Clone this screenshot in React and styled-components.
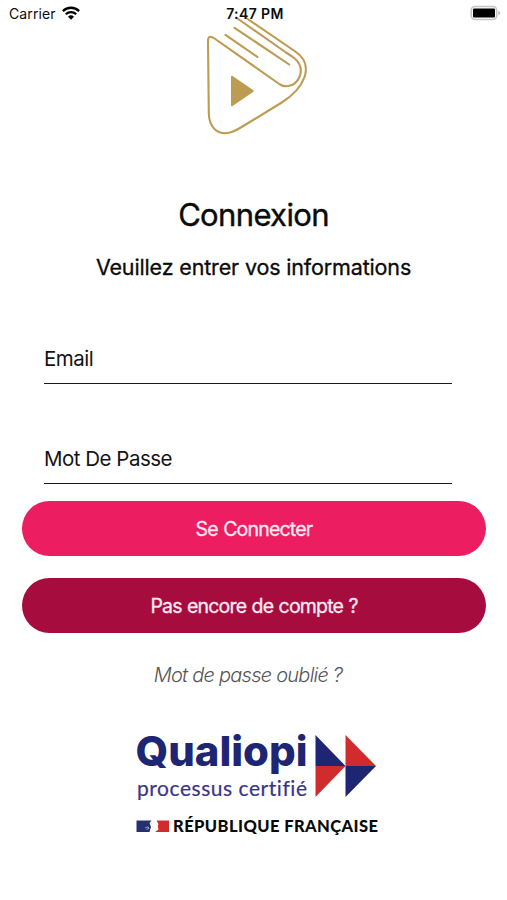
import React from 'react';
import styled, { createGlobalStyle } from 'styled-components';

const GlobalStyle = createGlobalStyle`
  * {
    box-sizing: border-box;
  }

  body {
    margin: 0;
    background-color: #ffffff;
    color: #0b0b0b;
    font-family: Inter, 'Liberation Sans', sans-serif;
  }
`;

const Screen = styled.main`
  width: 507px;
  height: 900px;
  overflow: hidden;
  display: flex;
  flex-direction: column;
  align-items: center;
`;

const StatusBar = styled.header`
  width: 100%;
  height: 27px;
  flex-shrink: 0;
  padding: 0 6px 0 9px;
  display: grid;
  grid-template-columns: 1fr auto 1fr;
  align-items: center;
  position: relative;
  z-index: 1;
`;

const Carrier = styled.div`
  display: flex;
  align-items: center;
  gap: 6px;
  font-size: 14px;
  letter-spacing: 0.1px;

  svg {
    margin-top: -2px;
  }
`;

const Time = styled.div`
  font-size: 14px;
  font-weight: 600;
  letter-spacing: 0.4px;
`;

const BatteryIcon = styled.svg`
  justify-self: end;
  margin-top: -1px;
`;

const Logo = styled.svg`
  flex-shrink: 0;
  margin-top: -13px;
  margin-left: 6px;
`;

const Title = styled.h1`
  margin: 58px 0 0;
  font-size: 31px;
  line-height: 38px;
  font-weight: 400;
  letter-spacing: -0.65px;
  -webkit-text-stroke: 0.4px;
`;

const Subtitle = styled.p`
  margin: 20px 0 0;
  font-size: 21.5px;
  line-height: 26px;
  letter-spacing: -0.15px;
  -webkit-text-stroke: 0.3px;
`;

const Form = styled.form`
  width: 464px;
  margin: 50px 0 0 1px;
  display: flex;
  flex-direction: column;
`;

const Input = styled.input`
  width: 408px;
  height: 54px;
  margin: 0 0 46px 22px;
  padding: 4px 0 0;
  border: 0;
  border-bottom: 1.5px solid #1b1b1b;
  border-radius: 0;
  background: none;
  font: inherit;
  font-size: 20.5px;
  letter-spacing: -0.5px;
  outline: none;

  &::placeholder {
    color: #141414;
    opacity: 1;
  }

  &:last-of-type {
    margin-bottom: 17px;
    padding-top: 3px;
  }
`;

const Button = styled.button`
  height: 55px;
  margin-bottom: 22px;
  padding: 0;
  border: 0;
  border-radius: 28px;
  background-color: ${({ $color }) => $color};
  color: #ffeaf2;
  font: inherit;
  font-size: 19.5px;
  letter-spacing: -0.8px;
  word-spacing: 0.6px;
  -webkit-text-stroke: 0.3px;
`;

const ForgotLink = styled.a`
  margin: 7px 0 0 -11px;
  font-size: 20px;
  line-height: 26px;
  font-style: italic;
  font-weight: 300;
  letter-spacing: -0.75px;
  color: #555555;
`;

const Certification = styled.svg`
  flex-shrink: 0;
  margin-top: 32px;
  margin-left: 7px;
`;

const LogoText = styled.text`
  font-family: ${({ $family }) => $family};
  font-size: ${({ $size }) => $size}px;
  font-weight: ${({ $weight }) => $weight};
  font-variant-ligatures: none;
`;

const App = () => (
  <>
    <GlobalStyle />
    <Screen>
      <StatusBar>
        <Carrier>
          Carrier
          <svg width='18' height='14' viewBox='0 0 18 14'>
            <g fill='none' stroke='#000000' strokeWidth='2.3'>
              <path d='M0.9 5.1a11.5 11.5 0 0 1 16.2 0' />
              <path d='M3.8 8.2a7.4 7.4 0 0 1 10.4 0' />
            </g>
            <path d='M9 13.8l-3-3.1a4.3 4.3 0 0 1 6 0z' />
          </svg>
        </Carrier>
        <Time>7:47 PM</Time>
        <BatteryIcon width='31' height='16' viewBox='0 0 31 16'>
          <rect x='1.2' y='1.5' width='25.5' height='13' rx='4' fill='#ffffff' stroke='#c4c4c4' strokeWidth='1.6' />
          <rect x='3' y='3.5' width='22' height='9' rx='1' />
          <path d='M28.5 5.700q2.800 2.300 0 4.600z' fill='#a5a5a5' />
        </BatteryIcon>
      </StatusBar>

      <Logo width='108' height='124' viewBox='203 14 108 124'>
        <g fill='none' stroke='#bd9b50' strokeWidth='2.1' strokeLinecap='round' strokeLinejoin='round'>
          <path d='M237.500 18.500L286 52.500Q290 55 293.500 57.500C301 63 302.500 71 299 78C295 86 286 88 280 84.500L214.500 38.500Q208 34 208 41L208.800 113C209 128 218 135.500 230 132.500Q235 131 240 128L281 103C294 95 301 87 304.500 77C308 67 304.500 58 296 52L245.500 17.500' />
          <path d='M234.500 27.800L289.200 64.500' />
          <path d='M225.500 34.800L257.500 57' />
        </g>
        <path d='M232 76.800L252.800 91L232 105.300Z' fill='#bd9b50' stroke='#bd9b50' strokeWidth='2' strokeLinejoin='round' />
      </Logo>

      <Title>Connexion</Title>
      <Subtitle>Veuillez entrer vos informations</Subtitle>

      <Form>
        <Input type='email' placeholder='Email' />
        <Input type='password' placeholder='Mot De Passe' />
        <Button type='button' $color='#ec1d60'>Se Connecter</Button>
        <Button type='button' $color='#a70c3e'>Pas encore de compte ?</Button>
      </Form>

      <ForgotLink>Mot de passe oublié ?</ForgotLink>

      <Certification width='250' height='118' viewBox='132 720 250 118'>
        <LogoText x='135.500' y='765.500' textLength='172' lengthAdjust='spacingAndGlyphs' $family='Inter, sans-serif' $size={41} $weight={800} fill='#1e2674'>Qualiopi</LogoText>
        <LogoText x='137' y='795.500' textLength='170' $family='Lato, sans-serif' $size={21} $weight={400} fill='#393589' stroke='#393589' strokeWidth='0.2'>processus certifié</LogoText>
        <path d='M315.500 735L345.500 766H315.500Z' fill='#1e2674' />
        <path d='M315.500 766H345.500L315.500 797Z' fill='#d12c2d' />
        <path d='M345.500 735L376 766H345.500Z' fill='#d12c2d' />
        <path d='M345.500 766H376L345.500 797Z' fill='#1e2674' />
        <path d='M136.500 820.500H151.500L149.500 823L151 827L149.500 832H136.500Z' fill='#26306f' />
        <path d='M156.500 820.500H169V832H155L158.500 829.500L157.800 826L158.500 824Z' fill='#d12c2d' />
        <path d='M145 828l3-1.200 1 1.700-2.500 1' fill='none' stroke='#b9bdd6' strokeWidth='0.8' />
        <LogoText x='173' y='832' textLength='205' $family='Lato, sans-serif' $size={16.5} $weight={900} fill='#0b0b0b'>RÉPUBLIQUE FRANÇAISE</LogoText>
      </Certification>
    </Screen>
  </>
);

export default App;
